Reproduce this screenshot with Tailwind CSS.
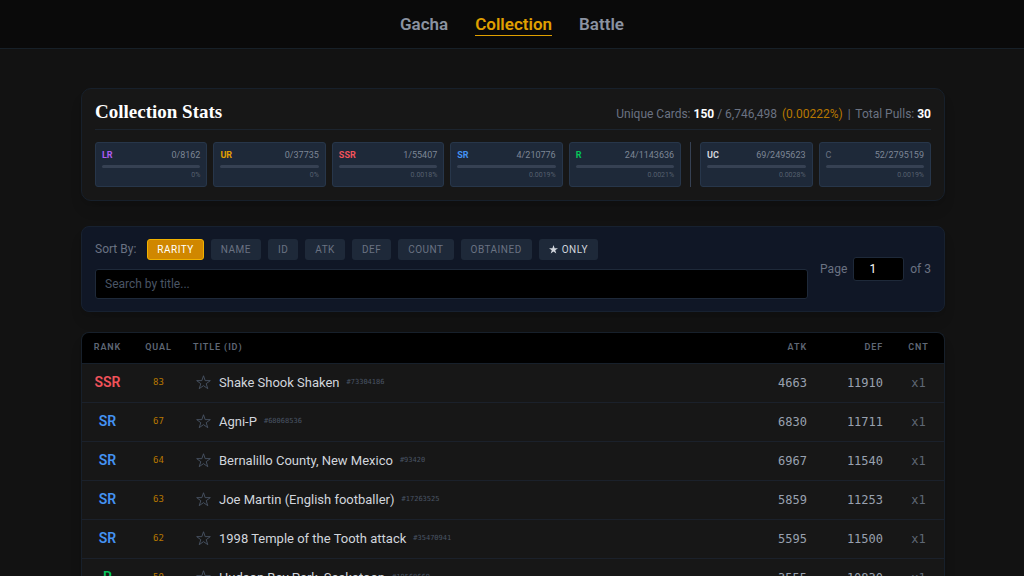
<!DOCTYPE html>
<html lang="en">
<head>
<meta charset="utf-8">
<meta name="viewport" content="width=device-width, initial-scale=1">
<title>Collection</title>
<script src="https://cdn.jsdelivr.net/npm/@tailwindcss/browser@4"></script>
</head>
<body class="h-screen overflow-hidden bg-[#121212] font-['Roboto','Liberation_Sans',sans-serif] text-[13px] text-[#d1d5dc]">
<header class="flex justify-center border-b border-[#172028] bg-[#0a0a0a] pt-[13px] pb-3">
  <nav aria-label="Main" class="flex gap-[27px] text-[17px] leading-[22px] font-semibold text-[#8b93a1]">
    <a href="#gacha" class="border-b border-transparent">Gacha</a>
    <a href="#collection" aria-current="page" class="border-b border-[#e0a000] text-[#e0a000]">Collection</a>
    <a href="#battle" class="border-b border-transparent">Battle</a>
  </nav>
</header>

<main class="flex flex-col pt-[39px] pr-[79px] pl-[81px]">
  <section aria-labelledby="stats" class="rounded-[10px] border border-[#17202b] bg-[#171717] px-[13px] pt-3 pb-[13px] shadow-lg">
    <div class="mb-3 flex items-end justify-between border-b border-[#1c242e] pb-[6px]">
      <h1 id="stats" class="font-['Liberation_Serif',serif] text-[19px] leading-[22px] font-bold text-white">Collection Stats</h1>
      <p class="text-[12px] leading-[17px] text-[#6a7282]">Unique Cards: <b class="text-white">150</b> / 6,746,498 <span class="ml-[2px] text-[#b87800]">(0.00222%)</span> <span class="mx-[2px]">|</span> Total Pulls: <b class="text-white">30</b></p>
    </div>
    <div id="tiles" class="flex gap-[6px]"></div>
  </section>

  <section aria-label="Sorting and search" class="mt-[25px] flex items-center gap-3 rounded-lg border border-[#172130] bg-[#101726] px-[13px] py-3 shadow-lg">
    <div class="flex min-w-0 flex-1 flex-col gap-[9px]">
      <div class="flex items-center gap-[7px]">
        <span class="mr-1 text-[12px] leading-[17px] text-[#6a7282]">Sort By:</span>
        <button class="h-[21px] rounded-[3px] border border-[#f0b100] bg-[#d08700] px-[9px] text-[10px] tracking-wider text-white">RARITY</button>
        <button class="h-[21px] rounded-[3px] bg-[#1e2939] px-[10px] text-[10px] tracking-wider text-[#6a7282]">NAME</button>
        <button class="h-[21px] rounded-[3px] bg-[#1e2939] px-[10px] text-[10px] tracking-wider text-[#6a7282]">ID</button>
        <button class="h-[21px] rounded-[3px] bg-[#1e2939] px-[10px] text-[10px] tracking-wider text-[#6a7282]">ATK</button>
        <button class="h-[21px] rounded-[3px] bg-[#1e2939] px-[10px] text-[10px] tracking-wider text-[#6a7282]">DEF</button>
        <button class="h-[21px] rounded-[3px] bg-[#1e2939] px-[10px] text-[10px] tracking-wider text-[#6a7282]">COUNT</button>
        <button class="h-[21px] rounded-[3px] bg-[#1e2939] px-[10px] text-[10px] tracking-wider text-[#6a7282]">OBTAINED</button>
        <button class="flex h-[21px] items-center gap-1 rounded-[3px] bg-[#1e2939] px-[10px] text-[10px] tracking-wider text-[#d1d5dc]"><svg class="size-[9px]" viewBox="0 0 20 20" fill="currentColor" aria-hidden="true"><path d="M10 0l2.5 7.3H20l-6.1 4.6L16.2 19 10 14.7 3.8 19l2.3-7.1L0 7.3h7.5z"/></svg>ONLY</button>
      </div>
      <input type="search" aria-label="Search by title" placeholder="Search by title..." class="h-[30px] w-full rounded-[3px] border border-[#1e2939] bg-black px-[9px] text-[12px] text-white placeholder:text-[#4a5565]">
    </div>
    <div class="flex items-center gap-[6px] text-[12px] text-[#6a7282]">
      <label for="page">Page</label>
      <input id="page" type="text" inputmode="numeric" value="1" class="h-6 w-[51px] rounded-[3px] border border-[#1e2939] bg-black pr-3 text-center text-white">
      <span>of 3</span>
    </div>
  </section>

  <section aria-label="Cards" class="mt-5 overflow-hidden rounded-t-lg border border-b-0 border-[#17202b] bg-[#171717] shadow-lg">
    <table class="w-full table-fixed border-collapse">
      <thead class="bg-black text-[9px] tracking-widest text-[#5f6775]">
        <tr class="h-[30px] border-b border-[#17202b]">
          <th class="w-[51px] font-semibold">RANK</th>
          <th class="w-[51px] font-semibold">QUAL</th>
          <th class="pl-[9px] text-left font-semibold">TITLE (ID)</th>
          <th class="w-[76px] pr-[10px] text-right font-semibold">ATK</th>
          <th class="w-[76px] pr-[10px] text-right font-semibold">DEF</th>
          <th class="w-[51px] font-semibold">CNT</th>
        </tr>
      </thead>
      <tbody id="rows"></tbody>
    </table>
  </section>
</main>

<script>
const tiles = [
  ['LR', '0/8162', '0%', 'font-bold text-[#ad5cf0]'],
  ['UR', '0/37735', '0%', 'font-bold text-[#e0a000]'],
  ['SSR', '1/55407', '0.0018%', 'font-bold text-[#f0525a]'],
  ['SR', '4/210776', '0.0019%', 'font-bold text-[#4492f2]'],
  ['R', '24/1143636', '0.0021%', 'font-bold text-[#05c45a]'],
  null,
  ['UC', '69/2495623', '0.0028%', 'font-bold text-[#d1d5dc]'],
  ['C', '52/2795159', '0.0019%', 'text-[#6a7282]'],
];
document.getElementById('tiles').innerHTML = tiles.map(t => t ? `
  <div class="h-[45px] min-w-0 flex-1 rounded-[3px] border border-[#27364a] bg-[#1e2939] px-[6px] pt-[6px]">
    <div class="flex items-center justify-between text-[9px] leading-3"><span class="${t[3]}">${t[0]}</span><span class="text-[#7d8695]">${t[1]}</span></div>
    <div class="mt-[4px] h-[3px] rounded-full bg-[#364153]"></div>
    <div class="mt-[3px] text-right text-[7px] leading-[9px] text-[#56606f]">${t[2]}</div>
  </div>` : '<div class="mx-[3px] w-px bg-[#364153]"></div>').join('');

const colors = { SSR: 'text-[#f0525a]', SR: 'text-[#4492f2]', R: 'text-[#05c45a]' };
const cards = [
  ['SSR', 83, 'Shake Shook Shaken', '73304186', 4663, 11910],
  ['SR', 67, 'Agni-P', '68068536', 6830, 11711],
  ['SR', 64, 'Bernalillo County, New Mexico', '93420', 6967, 11540],
  ['SR', 63, 'Joe Martin (English footballer)', '17263525', 5859, 11253],
  ['SR', 62, '1998 Temple of the Tooth attack', '35470941', 5595, 11500],
  ['R', 59, 'Hudson Bay Park, Saskatoon', '19568669', 3555, 10830],
];
document.getElementById('rows').innerHTML = cards.map(c => `
  <tr class="h-[39px] border-b border-[#1b212b]">
    <td class="text-center text-[14px] font-semibold ${colors[c[0]]}">${c[0]}</td>
    <td class="text-center font-['DejaVu_Sans_Mono',monospace] text-[9px] text-[#b87800]">${c[1]}</td>
    <td class="pl-3">
      <div class="flex items-center">
        <button aria-label="Favorite ${c[2]}" class="mr-[8px] text-[#4a5565]"><svg class="size-[15px]" viewBox="0 0 20 20" fill="none" stroke="currentColor" stroke-width="1.2" aria-hidden="true"><path d="M10 1l2.2 6.5h6.9l-5.5 4.1 2.1 6.6L10 14.2l-5.7 4 2.1-6.6L.9 7.5h6.9z"/></svg></button>
        <span class="text-[#d1d5dc]">${c[2]}</span>
        <span class="ml-[7px] font-['DejaVu_Sans_Mono',monospace] text-[7px] text-[#4a5565]">#${c[3]}</span>
      </div>
    </td>
    <td class="pr-[10px] text-right font-['DejaVu_Sans_Mono',monospace] text-[12px] text-[#99a1af]">${c[4]}</td>
    <td class="pr-[10px] text-right font-['DejaVu_Sans_Mono',monospace] text-[12px] text-[#99a1af]">${c[5]}</td>
    <td class="text-center font-['DejaVu_Sans_Mono',monospace] text-[12px] text-[#5f6775]">x1</td>
  </tr>`).join('');
</script>
</body>
</html>
